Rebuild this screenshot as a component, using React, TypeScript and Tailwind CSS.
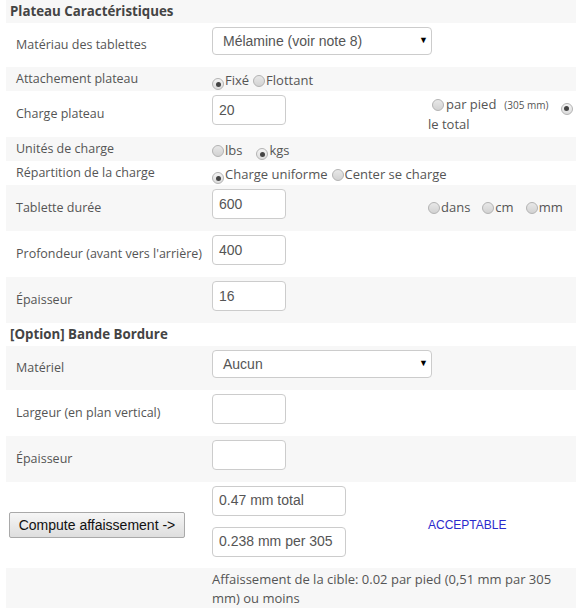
import React from 'react';

const Radio: React.FC<{ checked?: boolean }> = ({ checked }) => (
    <span
        className={`inline-flex items-center justify-center w-[12px] h-[12px] rounded-full border border-[#b4b4b4] align-[-2px] ${
            checked ? 'bg-gradient-to-b from-[#f4f4f4] to-[#dcdcdc]' : 'bg-gradient-to-b from-[#e8e8e8] to-[#d2d2d2]'
        }`}
    >
        {checked && <span className="block w-[5px] h-[5px] rounded-full bg-[#444]" />}
    </span>
);

const Choice: React.FC<{ label: string; checked?: boolean; className?: string }> = ({ label, checked, className }) => (
    <span className={`whitespace-nowrap ${className ?? ''}`}>
        <Radio checked={checked} />
        <span className="ml-[1px]">{label}</span>
    </span>
);

const TextBox: React.FC<{ value?: string; wide?: boolean }> = ({ value = '', wide }) => (
    <div
        className={`${wide ? 'w-[134px]' : 'w-[74px]'} h-[30px] mb-[11px] px-[6px] flex items-center rounded-[4px] border border-[#cccccc] bg-white text-[14px] text-[#555] font-['Liberation_Sans',Arial,sans-serif]`}
    >
        {value}
    </div>
);

const Select: React.FC<{ value: string }> = ({ value }) => (
    <div className="w-[220px] h-[28px] mb-[11px] pl-[10px] pr-[3px] flex items-center justify-between rounded-[4px] border border-[#cccccc] bg-white text-[14px] text-[#555] font-['Liberation_Sans',Arial,sans-serif]">
        <span>{value}</span>
        <span className="text-[9px] text-black">▼</span>
    </div>
);

type Row = {
    label: string;
    control: React.ReactNode;
    extra?: React.ReactNode;
    h: string;
};

const plateau: Row[] = [
    { label: 'Matériau des tablettes', control: <Select value="Mélamine (voir note 8)" />, h: 'h-[44px]' },
    {
        label: 'Attachement plateau',
        control: (
            <>
                <Choice label="Fixé" checked />
                <Choice label="Flottant" className="ml-[4px]" />
            </>
        ),
        h: 'h-[24px]',
    },
    {
        label: 'Charge plateau',
        control: <TextBox value="20" />,
        extra: (
            <div className="leading-[18px] whitespace-nowrap">
                <span className="ml-[4px]">
                    <Radio />
                </span>
                <span className="ml-[2px]">par pied</span>
                <span className="ml-[8px] text-[10px]">(305 mm)</span>
                <span className="ml-[12px]">
                    <Radio checked />
                </span>
                <br />
                le total
            </div>
        ),
        h: 'h-[46px]',
    },
    {
        label: 'Unités de charge',
        control: (
            <>
                <Choice label="lbs" />
                <Choice label="kgs" checked className="ml-[14px]" />
            </>
        ),
        h: 'h-[24px]',
    },
    {
        label: 'Répartition de la charge',
        control: (
            <>
                <Choice label="Charge uniforme" checked />
                <Choice label="Center se charge" className="ml-[4px]" />
            </>
        ),
        h: 'h-[24px]',
    },
    {
        label: 'Tablette durée',
        control: <TextBox value="600" />,
        extra: (
            <div className="whitespace-nowrap">
                <Choice label="dans" />
                <Choice label="cm" className="ml-[12px]" />
                <Choice label="mm" className="ml-[12px]" />
            </div>
        ),
        h: 'h-[46px]',
    },
    { label: "Profondeur (avant vers l'arrière)", control: <TextBox value="400" />, h: 'h-[46px]' },
    { label: 'Épaisseur', control: <TextBox value="16" />, h: 'h-[46px]' },
];

const bordure: Row[] = [
    { label: 'Matériel', control: <Select value="Aucun" />, h: 'h-[44px]' },
    { label: 'Largeur (en plan vertical)', control: <TextBox />, h: 'h-[46px]' },
    { label: 'Épaisseur', control: <TextBox />, h: 'h-[46px]' },
];

export default function App() {
    let stripe = 0;
    const bg = () => (stripe++ % 2 === 0 ? 'bg-[#f7f7f7]' : 'bg-white');

    const renderRow = (r: Row, i: number) => (
        <tr key={r.label + i} className={`${bg()} ${r.h}`}>
            <td className="pl-[10px] align-middle whitespace-nowrap text-[12.5px]">{r.label}</td>
            <td colSpan={r.extra ? 1 : 2} className="pl-[3px] pt-[3px] align-middle whitespace-nowrap">
                {r.control}
            </td>
            {r.extra && <td className="pl-[3px] align-middle">{r.extra}</td>}
        </tr>
    );

    const header = (title: string) => (
        <tr className={`${bg()} h-[23px]`}>
            <td colSpan={3} className="pl-[4px] font-bold text-[13.3px] text-[#444] align-middle">
                {title}
            </td>
        </tr>
    );

    return (
        <div className="w-[586px] h-[608px] bg-white overflow-hidden font-['Open_Sans',sans-serif] text-[13px] text-[#555]">
            <table className="ml-[6px] w-[570px] border-collapse table-fixed">
                <colgroup>
                    <col className="w-[203px]" />
                    <col className="w-[216px]" />
                    <col className="w-[151px]" />
                </colgroup>
                <tbody>
                    {header('Plateau Caractéristiques')}
                    {plateau.map(renderRow)}
                    {header('[Option] Bande Bordure')}
                    {bordure.map(renderRow)}
                    <tr className={`${bg()} h-[86px]`}>
                        <td className="pl-[3px] align-middle">
                            <button className="h-[26px] w-[176px] rounded-[2px] border border-[#a9a9a9] bg-gradient-to-b from-[#f6f6f6] to-[#dedede] text-[14px] text-[#111] font-['Liberation_Sans',Arial,sans-serif]">
                                Compute affaissement -&gt;
                            </button>
                        </td>
                        <td className="pl-[3px] pt-[3px] align-middle">
                            <TextBox value="0.47 mm total" wide />
                            <TextBox value="0.238 mm per 305" wide />
                        </td>
                        <td className="pl-[3px] align-middle text-[12px] text-[#2a2acc] font-['Liberation_Sans',Arial,sans-serif]">
                            ACCEPTABLE
                        </td>
                    </tr>
                    <tr className={bg()}>
                        <td />
                        <td colSpan={2} className="pl-[3px] pr-[10px] pt-[2px] pb-[6px] leading-[19px]">
                            Affaissement de la cible: 0.02 par pied (0,51 mm par 305 mm) ou moins
                        </td>
                    </tr>
                </tbody>
            </table>
        </div>
    );
}
